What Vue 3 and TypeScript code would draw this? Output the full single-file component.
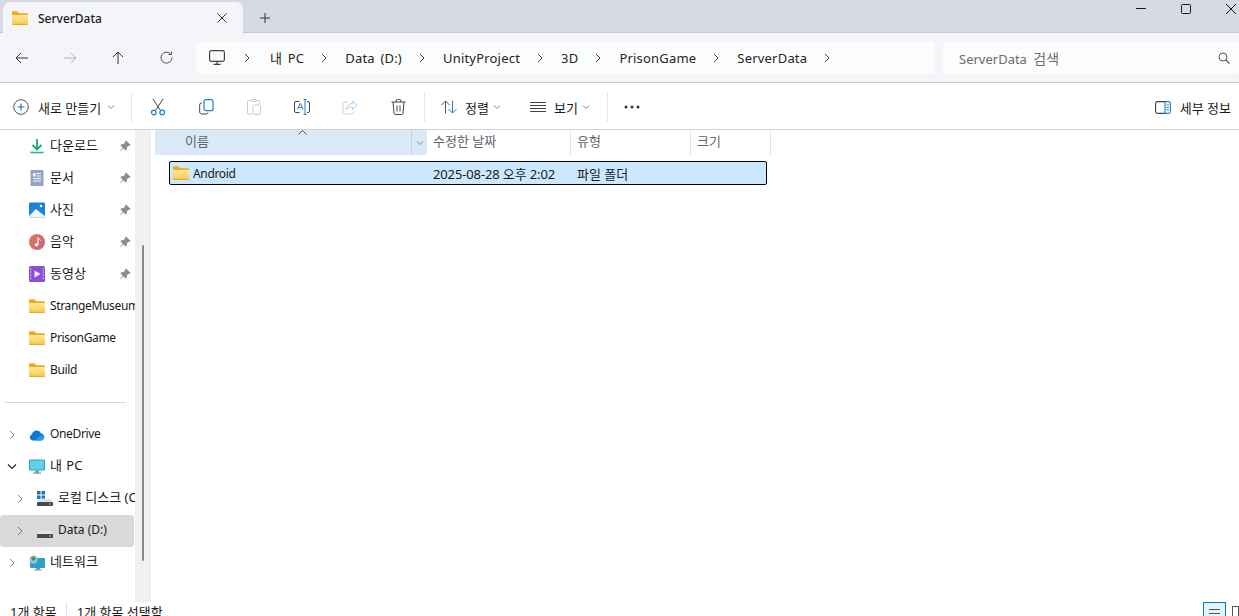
<script setup lang="ts">
const crumbs: string[] = ['내 PC', 'Data (D:)', 'UnityProject', '3D', 'PrisonGame', 'ServerData']
const folders: string[] = ['StrangeMuseum', 'PrisonGame', 'Build']
const quick = [
  { name: '다운로드', icon: 'i-download' },
  { name: '문서', icon: 'i-docs' },
  { name: '사진', icon: 'i-photo' },
  { name: '음악', icon: 'i-music' },
  { name: '동영상', icon: 'i-video' },
]
</script>

<template>
  <div class="win">
    <svg class="defs" width="0" height="0">
      <defs>
        <linearGradient id="fg" x1="0" y1="0" x2="0" y2="1">
          <stop offset="0" stop-color="#ffe89a" />
          <stop offset="1" stop-color="#fcc94f" />
        </linearGradient>
        <linearGradient id="mg" x1="0" y1="0" x2="1" y2="1">
          <stop offset="0" stop-color="#e8793f" />
          <stop offset="1" stop-color="#b9639a" />
        </linearGradient>
        <symbol id="i-folder" viewBox="0 0 16 14">
          <path d="M0 1.500A1.200 1.200 0 0 1 1.200.3h4l2 1.900h7.600A1.200 1.200 0 0 1 16 3.400V6H0z" fill="#f0ac16" />
          <path d="M0 4h16v8.600a1.100 1.100 0 0 1-1.100 1.100H1.100A1.100 1.100 0 0 1 0 12.600z" fill="url(#fg)" />
          <path d="M0 12.800h16v.2a1 1 0 0 1-1 .9H1a1 1 0 0 1-1-.9z" fill="#eeaa1e" />
        </symbol>
        <symbol id="i-chev" viewBox="0 0 8 10">
          <path d="M2 1l4 4-4 4" fill="none" stroke="#3c3c3c" stroke-width="1" />
        </symbol>
        <symbol id="i-down" viewBox="0 0 8 6">
          <path d="M1 1.500l3 3 3-3" fill="none" stroke="#8b8b8b" stroke-width="1" />
        </symbol>
        <symbol id="i-pin" viewBox="0 0 12 12">
          <path d="M7 .8l4.200 4.200-1 .7-.8-.2L7.600 7.400 7.400 9.600 6.400 10 2 5.600l.4-1 2.200-.2 1.900-1.800-.2-.8zM4 8l-2.800 2.900" fill="#8d8d8d" stroke="#8d8d8d" stroke-width=".8" />
        </symbol>
        <symbol id="i-download" viewBox="0 0 16 16">
          <path d="M8 1v10M3.500 7L8 11.500 12.500 7" fill="none" stroke="#1fa37e" stroke-width="1.800" />
          <path d="M1.500 14.500h13" stroke="#2bb592" stroke-width="1.600" />
        </symbol>
        <symbol id="i-docs" viewBox="0 0 16 16">
          <rect x="1.500" width="13" height="16" rx="1" fill="#8fa7c2" />
          <path d="M7.500 3.500h4.500M7.500 6h4.500M4 8.500h8M4 11h8" stroke="#f2f5f9" stroke-width="1" />
          <rect x="4" y="3" width="2.500" height="3.500" fill="#f2f5f9" />
        </symbol>
        <symbol id="i-photo" viewBox="0 0 16 16">
          <rect width="16" height="15" y=".5" rx="1" fill="#1f82d8" />
          <path d="M0 14l7-7 5 4 4 3v.5a1 1 0 0 1-1 1H1a1 1 0 0 1-1-1z" fill="#eef6fc" />
          <circle cx="12" cy="4" r="1.300" fill="#eef6fc" />
        </symbol>
        <symbol id="i-music" viewBox="0 0 16 16">
          <circle cx="8" cy="8" r="8" fill="url(#mg)" />
          <path d="M9 3.500v7" stroke="#fff" stroke-width="1.200" />
          <path d="M9 3.500c.5 1.500 2 1.500 2.500 3" stroke="#fff" fill="none" />
          <ellipse cx="7.500" cy="10.800" rx="1.800" ry="1.500" fill="#fff" />
        </symbol>
        <symbol id="i-video" viewBox="0 0 16 16">
          <rect width="16" height="16" rx="1.500" fill="#8a4fd6" />
          <path d="M5.500 4.500v7l6-3.500z" fill="#f3eefc" />
          <path d="M1 3h1.500M1 6h1.500M1 9h1.500M1 12h1.500M13.500 3H15M13.500 6H15M13.500 9H15M13.500 12H15" stroke="#e4d7f8" />
        </symbol>
        <symbol id="i-drive" viewBox="0 0 16 8">
          <path d="M3 .5h10L16 4H0z" fill="#e4e4e4" />
          <rect y="4" width="16" height="4" rx=".8" fill="#4a4a4a" />
          <rect x="12" y="5.500" width="2" height="1" fill="#8be08b" />
        </symbol>
      </defs>
    </svg>

    <header class="tabbar">
      <div class="tab">
        <svg class="ic-folder"><use href="#i-folder" /></svg>
        <span class="tab-title">ServerData</span>
        <svg class="tab-x" width="10" height="10" viewBox="0 0 10 10"><path d="M.5.500l9 9M9.500.500l-9 9" stroke="#333" /></svg>
      </div>
      <svg class="tab-plus" width="10" height="10" viewBox="0 0 10 10"><path d="M5 0v10M0 5h10" stroke="#333" /></svg>
      <div class="winctl">
        <svg width="10" height="10" viewBox="0 0 10 10"><path d="M0 4.500h10" stroke="#1a1a1a" /></svg>
        <svg width="10" height="10" viewBox="0 0 10 10"><rect x=".5" y=".5" width="9" height="9" rx="1" fill="none" stroke="#1a1a1a" /></svg>
        <svg width="10" height="10" viewBox="0 0 10 10"><path d="M0 0l10 10M10 0L0 10" stroke="#1a1a1a" /></svg>
      </div>
    </header>

    <nav class="addr">
      <div class="nav-btns">
        <button class="nav">
          <svg width="14" height="12" viewBox="0 0 14 12"><path d="M13 6H1M6 1L1 6l5 5" fill="none" stroke="#333" /></svg>
        </button>
        <button class="nav">
          <svg width="14" height="12" viewBox="0 0 14 12"><path d="M1 6h12M8 1l5 5-5 5" fill="none" stroke="#b4b4b4" /></svg>
        </button>
        <button class="nav">
          <svg width="12" height="14" viewBox="0 0 12 14"><path d="M6 13V1M1 6l5-5 5 5" fill="none" stroke="#333" /></svg>
        </button>
        <button class="nav">
          <svg width="13" height="13" viewBox="0 0 13 13"><path d="M10.800 3.200A5.500 5.500 0 1 0 12 6.500M11.500.500v3h-3" fill="none" stroke="#555" /></svg>
        </button>
      </div>
      <div class="crumbs">
        <svg class="pc" width="16" height="15" viewBox="0 0 16 15"><rect x=".6" y=".6" width="14.800" height="10.800" rx="1.800" fill="none" stroke="#444" stroke-width="1.200" /><path d="M8 11.500v2.500M4.500 14.300h7" stroke="#444" stroke-width="1.200" /></svg>
        <svg class="chev chev-first"><use href="#i-chev" /></svg>
        <template v-for="c in crumbs" :key="c">
          <span class="crumb">{{ c }}</span>
          <svg class="chev"><use href="#i-chev" /></svg>
        </template>
      </div>
      <div class="search">
        <span class="search-text">ServerData <span class="search-ko">검색</span></span>
        <svg width="12" height="12" viewBox="0 0 12 12"><circle cx="5" cy="5" r="4" fill="none" stroke="#555" /><path d="M8 8l3.500 3.500" stroke="#555" stroke-width="1.200" /></svg>
      </div>
    </nav>

    <div class="toolbar">
      <div class="tb-text new">
        <svg width="16" height="16" viewBox="0 0 16 16"><circle cx="8" cy="8" r="7.300" fill="none" stroke="#555" /><path d="M8 4.500v7M4.500 8h7" stroke="#0f78d4" stroke-width="1.200" /></svg>
        <span>새로 만들기</span>
        <svg class="dn"><use href="#i-down" /></svg>
      </div>
      <i class="sep" />
      <div class="tb-icon">
        <svg width="16" height="18" viewBox="0 0 16 18"><path d="M3 1l7.500 11.500M13 1L5.500 12.500" stroke="#444" fill="none" /><circle cx="3.800" cy="14.500" r="2.300" fill="none" stroke="#1d7fd0" stroke-width="1.200" /><circle cx="12.200" cy="14.500" r="2.300" fill="none" stroke="#1d7fd0" stroke-width="1.200" /></svg>
      </div>
      <div class="tb-icon">
        <svg width="15" height="16" viewBox="0 0 15 16"><path d="M3 4H2.500A1.800 1.800 0 0 0 .7 5.800v7.400A2 2 0 0 0 2.700 15h4.600A1.800 1.800 0 0 0 9 13.500" fill="none" stroke="#444" /><rect x="5" y=".7" width="9" height="11" rx="2" fill="none" stroke="#1d7fd0" stroke-width="1.200" /></svg>
      </div>
      <div class="tb-icon">
        <svg width="14" height="16" viewBox="0 0 14 16"><path d="M4 1.500H1.500A1 1 0 0 0 .5 2.500V14a1 1 0 0 0 1 1H5M9 1.500h2.500a1 1 0 0 1 1 1V5" fill="none" stroke="#c9c9c9" /><rect x="3.800" y=".5" width="5.500" height="2" rx=".8" fill="none" stroke="#c9c9c9" /><rect x="6" y="6" width="7.500" height="9.500" rx="1.500" fill="none" stroke="#a9d2f2" /></svg>
      </div>
      <div class="tb-icon">
        <svg width="16" height="16" viewBox="0 0 16 16"><path d="M5.500 2.500H2A1.500 1.500 0 0 0 .5 4v8A1.500 1.500 0 0 0 2 13.500h3.500M13 2.500h1A1.500 1.500 0 0 1 15.500 4v8a1.500 1.500 0 0 1-1.500 1.500h-1" fill="none" stroke="#444" /><path d="M3.500 10.500L6 4.500h.6l2.500 6M4.500 8.500h3.600" fill="none" stroke="#1d7fd0" /><path d="M11 1v14M9.500.5h3M9.500 15.500h3" stroke="#1d7fd0" fill="none" /></svg>
      </div>
      <div class="tb-icon">
        <svg width="16" height="15" viewBox="0 0 16 15"><path d="M6 2H2.500A1.500 1.500 0 0 0 1 3.500v9A1.500 1.500 0 0 0 2.500 14h8a1.500 1.500 0 0 0 1.500-1.500V11" fill="none" stroke="#d0d0d0" /><path d="M15 5L10.500 1v2.500C7 3.500 5 6 4.800 9.500 6.500 7.500 8 7 10.500 7v2.500z" fill="none" stroke="#a9d2f2" /></svg>
      </div>
      <div class="tb-icon">
        <svg width="15" height="16" viewBox="0 0 15 16"><path d="M.5 3h14M5 3V2a1.500 1.500 0 0 1 1.500-1.500h2A1.500 1.500 0 0 1 10 2v1M2 3l1 11a1.500 1.500 0 0 0 1.500 1.500h6A1.500 1.500 0 0 0 12 14l1-11M6 6.500v6M9 6.500v6" fill="none" stroke="#444" /></svg>
      </div>
      <i class="sep sep-b" />
      <div class="tb-text sort">
        <svg width="16" height="14" viewBox="0 0 16 14"><path d="M4.500 13.500V1M.5 5l4-4 4 4" fill="none" stroke="#555" /><path d="M11.500.500V13M7.500 9l4 4 4-4" fill="none" stroke="#1d7fd0" /></svg>
        <span>정렬</span>
        <svg class="dn"><use href="#i-down" /></svg>
      </div>
      <div class="tb-text view">
        <svg width="16" height="10" viewBox="0 0 16 10"><path d="M0 .5h16M0 3.500h16M0 6.500h16M0 9.500h16" stroke="#444" /></svg>
        <span>보기</span>
        <svg class="dn"><use href="#i-down" /></svg>
      </div>
      <i class="sep sep-c" />
      <svg class="dots" width="16" height="4" viewBox="0 0 16 4"><circle cx="2" cy="2" r="1.500" fill="#333" /><circle cx="8" cy="2" r="1.500" fill="#333" /><circle cx="14" cy="2" r="1.500" fill="#333" /></svg>
      <div class="tb-text details">
        <svg width="16" height="13" viewBox="0 0 16 13"><path d="M10 .6H2.500A1.900 1.900 0 0 0 .6 2.500v8a1.900 1.900 0 0 0 1.900 1.900H10" fill="none" stroke="#444" stroke-width="1.100" /><path d="M10 .6h3.500a1.900 1.900 0 0 1 1.900 1.900v8a1.900 1.900 0 0 1-1.900 1.900H10zM11.500 4h2.500M11.500 6.500h2.500M11.500 9h2.500" fill="none" stroke="#1d7fd0" stroke-width="1.100" /></svg>
        <span>세부 정보</span>
      </div>
    </div>

    <div class="body">
      <aside class="side">
        <div v-for="q in quick" :key="q.name" class="row">
          <svg class="ic"><use :href="'#' + q.icon" /></svg>
          <span class="label ko up">{{ q.name }}</span>
          <svg class="pin"><use href="#i-pin" /></svg>
        </div>
        <div v-for="f in folders" :key="f" class="row">
          <svg class="ic"><use href="#i-folder" /></svg>
          <span class="label latin">{{ f }}</span>
        </div>
        <div class="rule" />
        <div class="row">
          <svg class="exp"><use href="#i-chev" /></svg>
          <svg class="ic ic-wide" viewBox="0 0 16 11"><path d="M3.500 10.500A3.200 3.200 0 0 1 3 4.300 4.800 4.800 0 0 1 12 3.200a3.800 3.800 0 0 1 .6 7.300z" fill="#0f78d4" /><path d="M6 10.500L11 5.500 15.500 7.500a3.800 3.800 0 0 1-2.900 3z" fill="#2a9df0" /></svg>
          <span class="label latin up">OneDrive</span>
        </div>
        <div class="row">
          <svg class="exp exp-open" viewBox="0 0 10 8"><path d="M1 1.500l4 4 4-4" fill="none" stroke="#222" stroke-width="1.200" /></svg>
          <svg class="ic" viewBox="0 0 16 15"><rect width="16" height="11" rx="1" fill="#2aa3c7" /><rect x="1" y="1" width="14" height="9" fill="#5fd4e8" /><path d="M6 11h4v2H6zM4 13h8v1.200H4z" fill="#8797a5" /></svg>
          <span class="label mypc">내 PC</span>
        </div>
        <div class="row sub">
          <svg class="exp"><use href="#i-chev" /></svg>
          <span class="drive">
            <svg class="win-logo" width="8" height="8" viewBox="0 0 8 8"><path d="M0 0h3.500v3.500H0zM4.500 0H8v3.500H4.500zM0 4.500h3.500V8H0zM4.500 4.500H8V8H4.500z" fill="#1578c8" /></svg>
            <svg class="drv"><use href="#i-drive" /></svg>
          </span>
          <span class="label ko up2">로컬 디스크 (C:)</span>
        </div>
        <div class="row sub on">
          <svg class="exp"><use href="#i-chev" /></svg>
          <span class="drive"><svg class="drv"><use href="#i-drive" /></svg></span>
          <span class="label up">Data (D:)</span>
        </div>
        <div class="row">
          <svg class="exp"><use href="#i-chev" /></svg>
          <svg class="ic" viewBox="0 0 16 16"><rect x="1" y="3" width="15" height="10" rx="1" fill="#2aa3c7" /><path d="M7 13h4v1.500H7zM5 14.500h8v1H5z" fill="#8797a5" /><circle cx="4.500" cy="4.500" r="4" fill="#9fc4d8" /><path d="M2 3l3-2 2 3-3 2z" fill="#4a8a5a" /></svg>
          <span class="label ko up2">네트워크</span>
        </div>
      </aside>
      <div class="track"><div class="thumb" /></div>

      <main class="list">
        <div class="head">
          <div class="col col-name">
            <span>이름</span>
            <svg class="caret" width="9" height="5" viewBox="0 0 9 5"><path d="M.5 4.500l4-4 4 4" fill="none" stroke="#555" /></svg>
            <span class="col-drop"><svg class="dn"><use href="#i-down" /></svg></span>
          </div>
          <div class="col col-date">수정한 날짜</div>
          <div class="col col-type">유형</div>
          <div class="col col-size">크기</div>
        </div>
        <div class="item">
          <span class="cell-name">
            <svg class="ic-folder"><use href="#i-folder" /></svg>
            <span class="latin">Android</span>
          </span>
          <span class="cell-date">2025-08-28 오후 2:02</span>
          <span class="ko">파일 폴더</span>
        </div>
      </main>
    </div>

    <footer class="status">
      <span>1개 항목</span>
      <i class="status-sep" />
      <span>1개 항목 선택함</span>
      <span class="views">
        <span class="v-on"><i /><i /></span>
        <span class="v-off" />
      </span>
    </footer>
  </div>
</template>

<style>
html, body { overflow: hidden; }
</style>

<style scoped>
.win {
  width: 1239px;
  height: 616px;
  overflow: hidden;
  background: #fff;
  color: #1a1a1a;
  font-family: "Noto Sans", "Noto Sans CJK KR", sans-serif;
  font-size: 12px;
  display: flex;
  flex-direction: column;
}
.defs { position: absolute; }
svg { display: block; flex: none; }
button { all: unset; display: flex; }
.ko { font-size: 13px; }
.latin { letter-spacing: -.35px; }

.tabbar {
  height: 33px;
  flex: none;
  box-sizing: border-box;
  background: #d6dae4;
  border-bottom: 1px solid #c4c8d0;
  display: flex;
  align-items: flex-end;
  padding-left: 3px;
}
.tab {
  width: 240px;
  height: 31px;
  margin-bottom: -1px;
  box-sizing: border-box;
  background: #f3f5f9;
  border-radius: 7px 7px 0 0;
  display: flex;
  align-items: center;
  padding-left: 9px;
}
.ic-folder { width: 16px; height: 14px; }
.tab-title { margin: 2px 0 0 10px; font-size: 12px; font-weight: 500; }
.tab-x { margin-left: auto; margin-right: 16px; }
.tab-plus { margin: 0 0 9px 17px; }
.winctl {
  margin-left: auto;
  align-self: flex-start;
  display: flex;
  gap: 35px;
  padding: 4px 3px 0 0;
}

.addr {
  height: 50px;
  flex: none;
  box-sizing: border-box;
  background: #f3f5f9;
  border-bottom: 1px solid #c6c9cf;
  display: flex;
  align-items: center;
}
.nav-btns { display: flex; width: 198px; margin-left: -2px; align-items: center; }
.nav { width: 48px; justify-content: center; }
.crumbs, .search {
  height: 32px;
  box-sizing: border-box;
  background: #fbfcfc;
  border-radius: 4px;
  display: flex;
  align-items: center;
  font-size: 13px;
  color: #262626;
}
.crumbs { width: 739px; padding-left: 13px; word-spacing: 2px; letter-spacing: .2px; }
.chev { width: 8px; height: 10px; margin: 0 17px 0 0; }
.chev-first { margin: 0 19px 0 18px; }
.crumb + .chev { margin-left: 16px; }
.search {
  width: 296px;
  margin-left: 8px;
  padding: 0 9px 0 16px;
  color: #6c6c6c;
  justify-content: space-between;
  word-spacing: 3px;
}
.search-ko { font-size: 14px; }

.toolbar {
  height: 47px;
  flex: none;
  box-sizing: border-box;
  border-bottom: 1px solid #d2d2d2;
  display: flex;
  align-items: center;
  padding: 2px 0 0 13px;
  font-size: 13px;
}
.tb-text { display: flex; align-items: center; gap: 8px; }
.dn { width: 8px; height: 6px; }
.new { width: 114px; gap: 9px; }
.new .dn { margin-left: -3px; }
.sep { width: 1px; height: 30px; background: #e6e6e6; margin: 0 2px 0 4px; }
.tb-icon { width: 48px; display: flex; justify-content: center; }
.sep-b { margin: 0 16px 0 2px; }
.sort { width: 89px; }
.sort .dn, .view .dn { margin-left: -4px; }
.view { width: 77px; }
.sep-c { margin: 0 16px 0 0; }
.details { margin-left: auto; margin-right: 8px; gap: 9px; }

.body { flex: 1; min-height: 0; display: flex; }
.side { width: 135px; flex: none; overflow: hidden; }
.row {
  height: 32px;
  display: flex;
  align-items: center;
  padding-left: 29px;
  position: relative;
  white-space: nowrap;
}
.ic { width: 16px; height: 16px; margin-right: 5px; }
.ic-wide { width: 16px; height: 11px; }
.label { overflow: hidden; flex: 1; min-width: 0; margin-top: -2px; }
.up { margin-top: -4px; }
.up2 { margin-top: -6px; }
.mypc { font-size: 13px; word-spacing: 1px; margin-top: -6px; }
.pin { width: 12px; height: 12px; margin-right: 4px; flex: none; }
.rule { height: 1px; background: #d9d9d9; margin: 16px 9px 16px 5px; }
.exp { position: absolute; left: 8px; top: 11px; width: 8px; height: 10px; opacity: .6; }
.exp-open { opacity: 1; left: 7px; top: 12px; width: 10px; height: 8px; }
.sub { padding-left: 37px; }
.sub .exp { left: 16px; }
.on { background: #d9d9d9; border-radius: 3px; margin-right: 1px; }
.drive { position: relative; width: 16px; height: 16px; margin-right: 5px; flex: none; }
.drv { position: absolute; left: 0; bottom: 1px; width: 16px; height: 8px; }
.win-logo { position: absolute; left: 0; top: 0; }

.track {
  width: 16px;
  flex: none;
  background: #f0f0f0;
  box-sizing: border-box;
  padding: 115px 0 0 7px;
}
.thumb { width: 2px; height: 316px; background: #8a8a8a; border-radius: 1px; }

.list { flex: 1; padding-left: 4px; color: #1a1a1a; }
.head { height: 26px; display: flex; color: #5c6670; font-size: 13px; line-height: 22px; }
.col {
  box-sizing: border-box;
  padding-left: 6px;
  display: flex;
  align-items: flex-start;
  border-right: 1px solid #e4e4e4;
  margin-bottom: 1px;
}
.col-name {
  width: 272px;
  padding-left: 30px;
  background: #d9e9f7;
  border-radius: 2px;
  border-right: 0;
  position: relative;
}
.caret { position: absolute; left: 143px; top: 0; }
.col-drop {
  position: absolute;
  right: 0;
  top: 0;
  bottom: 0;
  width: 16px;
  border-left: 1px solid #c6d3de;
  box-sizing: border-box;
  display: flex;
  align-items: center;
  justify-content: center;
}
.col-date { width: 144px; }
.col-type { width: 120px; }
.col-size { width: 80px; }
.item {
  width: 598px;
  height: 24px;
  margin: 5px 0 0 14px;
  box-sizing: border-box;
  background: #cce8ff;
  border: 1px solid #000;
  border-radius: 2px;
  display: flex;
  align-items: center;
  padding-left: 3px;
}
.cell-name { width: 260px; display: flex; align-items: center; gap: 4px; }
.cell-date { width: 144px; font-size: 13px; letter-spacing: -.13px; }

.status {
  height: 14px;
  flex: none;
  display: flex;
  align-items: flex-start;
  padding-left: 10px;
  line-height: 20px;
  font-size: 13px;
}
.status-sep { width: 1px; height: 14px; background: #e0e0e0; margin: 0 10px 0 9px; }
.views { margin-left: auto; display: flex; gap: 6px; padding-right: 0; }
.v-on {
  width: 23px;
  height: 20px;
  box-sizing: border-box;
  border: 1px solid #0078d4;
  background: #e5f3fb;
  display: block;
  padding: 6px 5px 0;
}
.v-on i { display: block; height: 1px; background: #555; margin-bottom: 3px; }
.v-off { width: 7px; height: 20px; box-sizing: border-box; border: 1px solid #555; margin-top: 4px; }
</style>
